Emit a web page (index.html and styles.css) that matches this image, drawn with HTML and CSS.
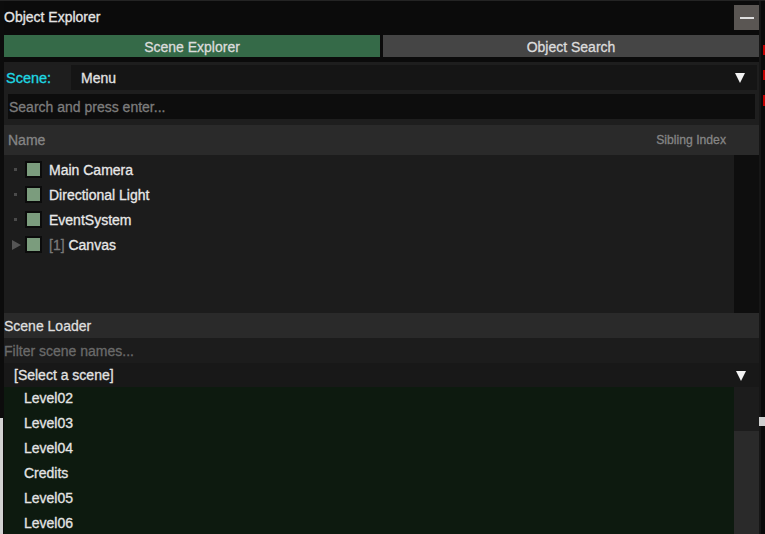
FILE: index.html
```html
<!DOCTYPE html>
<html>
<head>
<meta charset="utf-8">
<link rel="stylesheet" href="styles.css">
</head>
<body>
<div class="screen">
  <div class="edge-left"><div class="edge-left-light"></div></div>
  <div class="window">
    <div class="titlebar">
      <span class="title">Object Explorer</span>
      <div class="min-btn"><span class="min-line"></span></div>
    </div>
    <div class="tabs">
      <div class="tab tab-active">Scene Explorer</div>
      <div class="tab">Object Search</div>
    </div>
    <div class="panel">
      <div class="scene-row">
        <span class="scene-label">Scene:</span>
        <div class="dropdown">
          <span>Menu</span>
          <span class="tri"></span>
        </div>
      </div>
      <div class="search">Search and press enter...</div>
      <div class="header">
        <span>Name</span>
        <span class="sibling">Sibling Index</span>
      </div>
      <div class="tree">
        <div class="tree-items">
          <div class="item"><span class="lead"><span class="dot"></span></span><span class="check"></span><span class="label">Main Camera</span></div>
          <div class="item"><span class="lead"><span class="dot"></span></span><span class="check"></span><span class="label">Directional Light</span></div>
          <div class="item"><span class="lead"><span class="dot"></span></span><span class="check"></span><span class="label">EventSystem</span></div>
          <div class="item"><span class="lead"><span class="arrow"></span></span><span class="check"></span><span class="label"><span class="count">[1]</span> Canvas</span></div>
        </div>
        <div class="scroll"></div>
      </div>
      <div class="loader-head">Scene Loader</div>
      <div class="filter">Filter scene names...</div>
      <div class="select-row">
        <span>[Select a scene]</span>
        <span class="tri tri-2"></span>
      </div>
      <div class="list">
        <div class="list-items">
          <div class="opt">Level02</div>
          <div class="opt">Level03</div>
          <div class="opt">Level04</div>
          <div class="opt">Credits</div>
          <div class="opt">Level05</div>
          <div class="opt">Level06</div>
        </div>
        <div class="list-side">
          <div class="side-top"></div>
          <div class="side-bottom"></div>
        </div>
      </div>
    </div>
  </div>
  <div class="edge-right">
    <div class="red r1"></div>
    <div class="red r2"></div>
    <div class="red r3"></div>
    <div class="light-bit"></div>
  </div>
</div>
</body>
</html>
```

FILE: styles.css
```css
* { box-sizing: border-box; }
html, body { margin: 0; padding: 0; background: #0a0a0a; }
body {
  font-family: "Liberation Sans", Arial, sans-serif;
  font-size: 14px;
  color: #e2e2e2;
  -webkit-text-stroke: 0.3px;
}
.screen {
  width: 765px;
  height: 534px;
  overflow: hidden;
  display: flex;
  border-top: 1px solid #242424;
}
.edge-left {
  width: 4px;
  display: flex;
  flex-direction: column;
  justify-content: flex-end;
  background: #0c0c0c;
}
.edge-left-light {
  width: 3px;
  height: 116px;
  background: #d2d2d2;
}
.window {
  width: 755px;
  display: flex;
  flex-direction: column;
  background: #0b0b0b;
  overflow: hidden;
}
.window > * { flex-shrink: 0; }
.titlebar {
  height: 32px;
  display: flex;
  justify-content: space-between;
  align-items: flex-start;
}
.title {
  margin-top: 8px;
  line-height: 16px;
  color: #e4e4e4;
}
.min-btn {
  margin-top: 4px;
  width: 25px;
  height: 25px;
  background: #5a5653;
  display: flex;
  align-items: center;
  justify-content: center;
}
.min-line {
  width: 14px;
  height: 2px;
  background: #dedede;
  margin-left: 1px;
}
.tabs {
  margin-top: 2px;
  height: 22px;
  display: flex;
  gap: 3px;
}
.tab {
  flex: 1;
  display: flex;
  align-items: center;
  justify-content: center;
  background: #454545;
  color: #dcdcdc;
  padding-top: 1px;
}
.tab-active {
  flex: 0 0 376px;
  background: #356a48;
}
.panel {
  margin-top: 5px;
  flex: 1 1 auto;
  min-height: 0;
  overflow: hidden;
  background: #1e1e1e;
  display: flex;
  flex-direction: column;
  padding-top: 3px;
}
.panel > * { flex-shrink: 0; }
.scene-row {
  height: 25px;
  display: flex;
  align-items: center;
}
.scene-label {
  width: 67px;
  padding-left: 2px;
  color: #1ed8e3;
  font-size: 14.5px;
}
.dropdown {
  flex: 1;
  margin-right: 2px;
  height: 25px;
  background: #151515;
  display: flex;
  align-items: center;
  justify-content: space-between;
  padding: 0 12px 0 10px;
}
.tri {
  width: 0;
  height: 0;
  border-left: 5px solid transparent;
  border-right: 5px solid transparent;
  border-top: 10px solid #f2f2f2;
}
.search {
  margin: 4px 4px 0 4px;
  height: 25px;
  background: #0d0d0d;
  color: #7c7c7c;
  display: flex;
  align-items: center;
  padding-left: 1px;
}
.header {
  margin-top: 6px;
  height: 30px;
  background: #2a2a2a;
  color: #858585;
  display: flex;
  align-items: center;
  justify-content: space-between;
  padding: 0 33px 0 4px;
}
.sibling { font-size: 12.2px; }
.tree {
  height: 158px;
  display: flex;
}
.tree-items {
  flex: 1;
  background: #1c1c1c;
  padding-top: 2px;
}
.scroll {
  width: 25px;
  background: #0e0e0e;
}
.item {
  height: 25px;
  display: flex;
  align-items: center;
}
.lead {
  width: 21px;
  display: flex;
  justify-content: center;
  align-items: center;
  padding-left: 1px;
}
.dot {
  width: 3px;
  height: 3px;
  background: #4a4a4a;
}
.arrow {
  width: 0;
  height: 0;
  border-top: 5px solid transparent;
  border-bottom: 5px solid transparent;
  border-left: 9px solid #555555;
  margin-left: 2px;
}
.check {
  width: 17px;
  height: 17px;
  border: 2px solid #0b0b0b;
  background: #7b9c7d;
  margin-right: 7px;
}
.label { color: #e8e8e8; }
.count { color: #7a7a7a; }
.loader-head {
  height: 25px;
  background: #2a2a2a;
  display: flex;
  align-items: center;
  color: #dedede;
}
.filter {
  height: 25px;
  background: #1c1c1c;
  color: #6a6a6a;
  display: flex;
  align-items: center;
}
.select-row {
  height: 24px;
  background: #181818;
  display: flex;
  align-items: center;
  justify-content: space-between;
  padding: 0 13px 0 10px;
  color: #e2e2e2;
}
.tri-2 { margin-top: 2px; }
.panel > .list {
  flex: 1 1 auto;
  min-height: 0;
  overflow: hidden;
  display: flex;
}
.list-items {
  flex: 1;
  background: #0d1a0f;
  padding-left: 20px;
}
.opt {
  height: 25px;
  display: flex;
  align-items: center;
  padding-bottom: 3px;
  color: #e4e4e4;
}
.list-side {
  width: 25px;
  display: flex;
  flex-direction: column;
}
.side-top {
  height: 44px;
  background: #1c1c1c;
}
.side-bottom {
  flex: 1;
  background: #2a2a2a;
}
.edge-right {
  width: 6px;
  display: flex;
  flex-direction: column;
  align-items: flex-end;
  background: #0a0a0a;
  border-left: 2px solid #161616;
}
.red {
  width: 2px;
  height: 10px;
  background: #c40000;
}
.r1 { margin-top: 44px; }
.r2 { margin-top: 15px; }
.r3 { margin-top: 15px; height: 11px; }
.light-bit {
  margin-top: 311px;
  width: 6px;
  height: 9px;
  background: #cfcfcf;
  align-self: stretch;
  margin-left: -2px;
}
```
